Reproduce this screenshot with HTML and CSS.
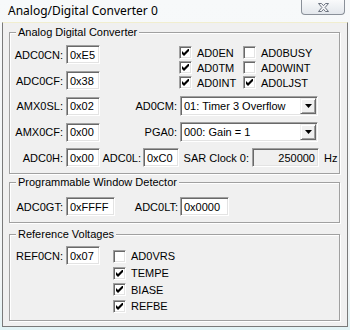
FILE: index.html
```html
<!DOCTYPE html>
<html lang="en">

<head>
    <meta charset="UTF-8">
    <title>Analog/Digital Converter 0</title>
    <link rel="stylesheet" href="styles.css">
</head>

<body>
    <div class="window">
        <div class="titlebar">
            <span class="title">Analog/Digital Converter 0</span>
            <span class="close-btn">
                <svg width="13" height="11" viewBox="0 0 13 11">
                    <path d="M1.5 1.5h3l2 2.2 2-2.2h3l-3.4 4 3.4 4h-3l-2-2.2-2 2.2h-3l3.4-4z" fill="#f4f5f7" stroke="#6d7480" stroke-width="1" />
                </svg>
            </span>
        </div>

        <div class="client">
            <fieldset class="group">
                <legend>Analog Digital Converter</legend>

                <div class="adc-top">
                    <div class="reg-col">
                        <div class="field">
                            <label class="lbl lbl-left">ADC0CN:</label>
                            <span class="edit w34">0xE5</span>
                        </div>
                        <div class="field gap-cf">
                            <label class="lbl lbl-left">ADC0CF:</label>
                            <span class="edit w34">0x38</span>
                        </div>
                    </div>
                    <div class="check-grid">
                        <div class="check"><span class="cb on"><svg width="7" height="7" viewBox="0 0 7 7"><polygon points="0,2 2,4 7,-1 7,2 2,7 0,5" /></svg></span>AD0EN</div>
                        <div class="check"><span class="cb"></span>AD0BUSY</div>
                        <div class="check"><span class="cb on"><svg width="7" height="7" viewBox="0 0 7 7"><polygon points="0,2 2,4 7,-1 7,2 2,7 0,5" /></svg></span>AD0TM</div>
                        <div class="check"><span class="cb"></span>AD0WINT</div>
                        <div class="check"><span class="cb on"><svg width="7" height="7" viewBox="0 0 7 7"><polygon points="0,2 2,4 7,-1 7,2 2,7 0,5" /></svg></span>AD0INT</div>
                        <div class="check"><span class="cb on"><svg width="7" height="7" viewBox="0 0 7 7"><polygon points="0,2 2,4 7,-1 7,2 2,7 0,5" /></svg></span>AD0LJST</div>
                    </div>
                </div>

                <div class="field row-gap">
                    <label class="lbl lbl-left">AMX0SL:</label>
                    <span class="edit w34">0x02</span>
                    <label class="lbl lbl-combo">AD0CM:</label>
                    <div class="combo">
                        <span>01: Timer 3 Overflow</span>
                        <span class="combo-btn"><svg width="7" height="4" viewBox="0 0 7 4"><polygon points="0,0 7,0 3.5,4" /></svg></span>
                    </div>
                </div>

                <div class="field row-gap">
                    <label class="lbl lbl-left">AMX0CF:</label>
                    <span class="edit w34">0x00</span>
                    <label class="lbl lbl-combo">PGA0:</label>
                    <div class="combo">
                        <span>000: Gain = 1</span>
                        <span class="combo-btn"><svg width="7" height="4" viewBox="0 0 7 4"><polygon points="0,0 7,0 3.5,4" /></svg></span>
                    </div>
                </div>

                <div class="field row-gap last-row">
                    <label class="lbl lbl-left">ADC0H:</label>
                    <span class="edit w34">0x00</span>
                    <label class="lbl lbl-adcl">ADC0L:</label>
                    <span class="edit w36">0xC0</span>
                    <label class="lbl lbl-sar">SAR Clock 0:</label>
                    <span class="edit readonly w67">250000</span>
                    <span class="unit">Hz</span>
                </div>
            </fieldset>

            <fieldset class="group group-window">
                <legend>Programmable Window Detector</legend>
                <div class="field window-row">
                    <label class="lbl lbl-left">ADC0GT:</label>
                    <span class="edit w49">0xFFFF</span>
                    <label class="lbl lbl-lt">ADC0LT:</label>
                    <span class="edit w49">0x0000</span>
                </div>
            </fieldset>

            <fieldset class="group group-ref">
                <legend>Reference Voltages</legend>
                <div class="ref-row">
                    <div class="field">
                        <label class="lbl lbl-left">REF0CN:</label>
                        <span class="edit w34">0x07</span>
                    </div>
                    <div class="ref-checks">
                        <div class="check"><span class="cb"></span>AD0VRS</div>
                        <div class="check"><span class="cb on"><svg width="7" height="7" viewBox="0 0 7 7"><polygon points="0,2 2,4 7,-1 7,2 2,7 0,5" /></svg></span>TEMPE</div>
                        <div class="check"><span class="cb on"><svg width="7" height="7" viewBox="0 0 7 7"><polygon points="0,2 2,4 7,-1 7,2 2,7 0,5" /></svg></span>BIASE</div>
                        <div class="check"><span class="cb on"><svg width="7" height="7" viewBox="0 0 7 7"><polygon points="0,2 2,4 7,-1 7,2 2,7 0,5" /></svg></span>REFBE</div>
                    </div>
                </div>
            </fieldset>
        </div>
    </div>
</body>

</html>
```

FILE: styles.css
```css
body {
    margin: 0;
    width: 350px;
    height: 330px;
    overflow: hidden;
    background: linear-gradient(to bottom, #f7f9fa 0%, #f3f6f7 85%, #e2f3f5 100%);
    font-family: "Liberation Sans", Arial, sans-serif;
    font-size: 11px;
    color: #000;
}

/* title bar */
.titlebar {
    height: 22px;
    display: flex;
    align-items: flex-start;
}

.title {
    font-family: "Noto Sans", "Open Sans", sans-serif;
    font-size: 12px;
    line-height: 16px;
    margin: 3px 0 0 8px;
}

.close-btn {
    margin-left: auto;
    margin-right: 5px;
    width: 44px;
    height: 15px;
    box-sizing: border-box;
    border: 1px solid #8a9099;
    border-top: none;
    border-radius: 0 0 4px 4px;
    background: linear-gradient(to bottom, #f9fafb, #e3e7ec);
    display: flex;
    justify-content: center;
    align-items: center;
}

/* dialog client area */
.client {
    margin-left: 2px;
    width: 346px;
    height: 305px;
    box-sizing: border-box;
    border: 1px solid #7a7a7a;
    border-top-color: #f1eecf;
    background: #f0f0f0;
    padding-top: 3px;
}

.group {
    margin: 0 0 0 6px;
    padding: 0;
    width: 331px;
    box-sizing: border-box;
    border: 1px solid #a0a0a0;
    box-shadow: 1px 1px 0 #fff, inset 1px 1px 0 #fff;
    min-width: 0;
}

.group legend {
    margin-left: 6px;
    padding: 0 2px;
    line-height: 13px;
    background: #f0f0f0;
}

.group-window {
    margin-top: 2px;
}

.group-ref {
    margin-top: 5px;
}

.field {
    display: flex;
    align-items: center;
}

.lbl {
    text-align: right;
    white-space: nowrap;
}

.lbl-left {
    width: 53px;
    margin-right: 3px;
}

.lbl-combo {
    width: 77px;
    margin-right: 3px;
}

.lbl-adcl {
    width: 41px;
    margin-right: 2px;
}

.lbl-sar {
    width: 70px;
    margin-right: 3px;
}

.lbl-lt {
    width: 63px;
    margin-right: 2px;
}

/* sunken edit box */
.edit {
    height: 19px;
    box-sizing: border-box;
    display: flex;
    align-items: center;
    padding-left: 3px;
    background: #fff;
    border: 1px solid;
    border-color: #a0a0a0 #fff #fff #a0a0a0;
    box-shadow: inset 1px 1px 0 #696969, inset -1px -1px 0 #e3e3e3;
}

.edit.readonly {
    background: #f0f0f0;
    justify-content: flex-end;
    padding: 0 3px 0 0;
}

.w34 { width: 34px; }
.w36 { width: 36px; }
.w49 { width: 49px; }
.w67 { width: 67px; }

.unit {
    margin-left: 5px;
}

/* first block: registers + flag checkboxes */
.adc-top {
    display: flex;
    margin-top: 6px;
}

.gap-cf {
    margin-top: 7px;
}

.check-grid {
    margin-left: 79px;
    display: grid;
    grid-template-columns: 64px auto;
    grid-auto-rows: 15px;
}

.check {
    display: flex;
    align-items: center;
    white-space: nowrap;
}

.cb {
    width: 13px;
    height: 13px;
    box-sizing: border-box;
    margin-right: 5px;
    background: #fff;
    border: 1px solid;
    border-color: #a0a0a0 #fff #fff #a0a0a0;
    box-shadow: inset 1px 1px 0 #696969, inset -1px -1px 0 #e3e3e3;
    display: flex;
    justify-content: center;
    align-items: center;
}

.row-gap {
    margin-top: 6px;
}

.last-row {
    margin-bottom: 6px;
}

/* drop-down list */
.combo {
    width: 138px;
    height: 20px;
    box-sizing: border-box;
    display: flex;
    align-items: center;
    padding-left: 3px;
    background: #fff;
    border: 1px solid;
    border-color: #a0a0a0 #fff #fff #a0a0a0;
    box-shadow: inset 1px 1px 0 #696969, inset -1px -1px 0 #e3e3e3;
}

.combo-btn {
    margin-left: auto;
    margin-right: 1px;
    width: 16px;
    height: 16px;
    box-sizing: border-box;
    background: #f0f0f0;
    border: 1px solid;
    border-color: #f0f0f0 #696969 #696969 #f0f0f0;
    box-shadow: inset 1px 1px 0 #fff, inset -1px -1px 0 #a0a0a0;
    display: flex;
    justify-content: center;
    align-items: center;
}

/* window detector */
.window-row {
    margin: 8px 0 6px;
}

/* reference voltages */
.ref-row {
    display: flex;
    align-items: flex-start;
    margin: 5px 0 5px;
}

.ref-checks {
    margin-left: 13px;
    margin-top: 2px;
    display: grid;
    grid-auto-rows: 16.7px;
}
```
